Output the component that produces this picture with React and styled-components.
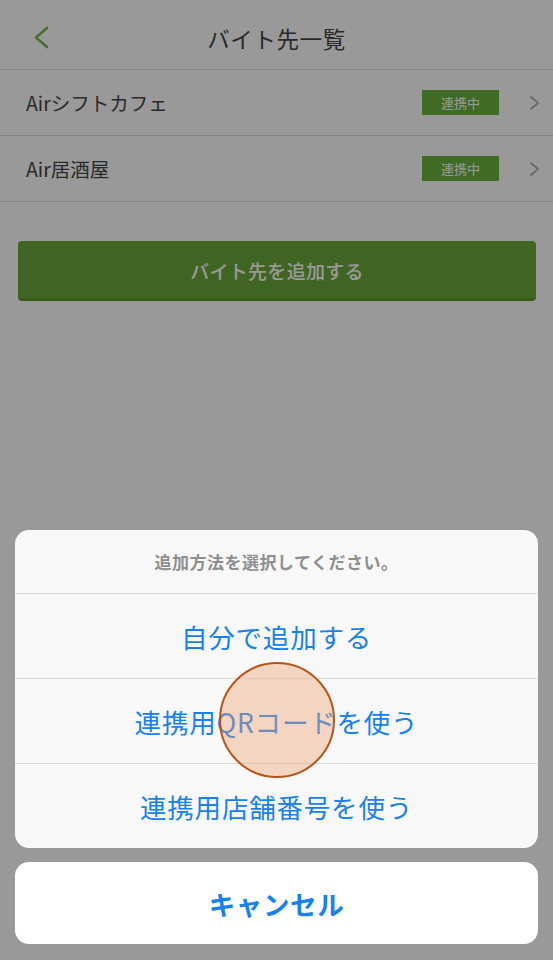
import React from 'react';
import styled, { createGlobalStyle } from 'styled-components';

const GlobalStyle = createGlobalStyle`
  body {
    margin: 0;
    font-family: "Noto Sans CJK JP", "Noto Sans", sans-serif;
  }
  * { box-sizing: border-box; }
`;

const shops = [
  { name: 'Airシフトカフェ', status: '連携中' },
  { name: 'Air居酒屋', status: '連携中' },
];

const options = ['自分で追加する', '連携用QRコードを使う', '連携用店舗番号を使う'];

const Chevron = ({ left, color, width, height, stroke }) => (
  <svg width={width} height={height} viewBox={`0 0 ${width} ${height}`} fill="none">
    {left ? (
      <polyline points={`${width - 2},2 2,${height / 2} ${width - 2},${height - 2}`} stroke={color} strokeWidth={stroke} strokeLinecap="round" strokeLinejoin="round" />
    ) : (
      <polyline points={`2,2 ${width - 2},${height / 2} 2,${height - 2}`} stroke={color} strokeWidth={stroke} strokeLinecap="round" strokeLinejoin="round" />
    )}
  </svg>
);

const App = () => {
  return (
    <Screen>
      <GlobalStyle />
      <NavBar>
        <BackButton>
          <Chevron left color="#78bb4b" width={15} height={23} stroke={2.6} />
        </BackButton>
        <NavTitle>バイト先一覧</NavTitle>
      </NavBar>
      <ShopList>
        {shops.map((s) => (
          <ShopRow key={s.name}>
            <ShopName>{s.name}</ShopName>
            <Badge>{s.status}</Badge>
            <RowArrow>
              <Chevron color="#b4b4b4" width={11} height={16} stroke={2} />
            </RowArrow>
          </ShopRow>
        ))}
      </ShopList>
      <AddArea>
        <AddButton>バイト先を追加する</AddButton>
      </AddArea>

      <Dimmer>
        <Sheet>
          <SheetTitle>追加方法を選択してください。</SheetTitle>
          {options.map((o, i) => (
            <SheetOption key={o} last={i === options.length - 1}>{o}</SheetOption>
          ))}
        </Sheet>
        <CancelButton>キャンセル</CancelButton>
      </Dimmer>
      <TouchMarker />
    </Screen>
  );
};

export default App;

const Screen = styled.div`
  position: relative;
  width: 553px;
  height: 960px;
  background: #ffffff;
  overflow: hidden;
`;

const NavBar = styled.div`
  position: relative;
  height: 70px;
  border-bottom: 1px solid #dedede;
  display: flex;
  align-items: center;
  justify-content: center;
  padding-top: 6px;
`;

const BackButton = styled.div`
  position: absolute;
  left: 34px;
  top: 26px;
  display: flex;
`;

const NavTitle = styled.div`
  font-size: 22.5px;
  color: #474747;
  letter-spacing: 0.6px;
`;

const ShopList = styled.div`
  display: flex;
  flex-direction: column;
`;

const ShopRow = styled.div`
  height: 66px;
  border-bottom: 1px solid #dedede;
  display: flex;
  align-items: center;
  padding: 0 13px 0 26px;
`;

const ShopName = styled.div`
  flex: 1;
  font-size: 19.5px;
  color: #474747;
`;

const Badge = styled.div`
  width: 77px;
  height: 25px;
  background: #6cb33c;
  color: #ffffff;
  font-size: 13px;
  display: flex;
  align-items: center;
  justify-content: center;
`;

const RowArrow = styled.div`
  margin-left: 30px;
  display: flex;
`;

const AddArea = styled.div`
  padding: 39px 17px 0 18px;
`;

const AddButton = styled.div`
  height: 60px;
  border-radius: 4px;
  background: #6ba83a;
  border-bottom: 3px solid #5f9833;
  color: #ffffff;
  font-size: 19px;
  font-weight: 500;
  letter-spacing: 0.3px;
  display: flex;
  align-items: center;
  justify-content: center;
  padding-top: 2px;
`;

const Dimmer = styled.div`
  position: absolute;
  inset: 0;
  background: rgba(0, 0, 0, 0.4);
  display: flex;
  flex-direction: column;
  justify-content: flex-end;
  gap: 14px;
  padding: 0 15px 16px;
`;

const Sheet = styled.div`
  background: #f8f8f8;
  border-radius: 14px;
  overflow: hidden;
  display: flex;
  flex-direction: column;
`;

const SheetTitle = styled.div`
  height: 64px;
  border-bottom: 1px solid #dcdcdc;
  display: flex;
  align-items: center;
  justify-content: center;
  font-size: 17px;
  font-weight: 600;
  letter-spacing: 0.5px;
  color: #8e8e8e;
`;

const SheetOption = styled.div`
  height: ${(p) => (p.last ? '84px' : '85px')};
  border-bottom: ${(p) => (p.last ? 'none' : '1px solid #dcdcdc')};
  display: flex;
  align-items: center;
  justify-content: center;
  font-size: 26.5px;
  letter-spacing: 0.8px;
  color: #1781f2;
`;

const CancelButton = styled.div`
  height: 82px;
  background: #ffffff;
  border-radius: 14px;
  display: flex;
  align-items: center;
  justify-content: center;
  font-size: 26.5px;
  font-weight: 700;
  letter-spacing: 0.6px;
  color: #1781f2;
`;

const TouchMarker = styled.div`
  position: absolute;
  left: 219px;
  top: 662px;
  width: 116px;
  height: 116px;
  border-radius: 50%;
  background: rgba(236, 160, 110, 0.4);
  border: 2px solid #b4561c;
`;
